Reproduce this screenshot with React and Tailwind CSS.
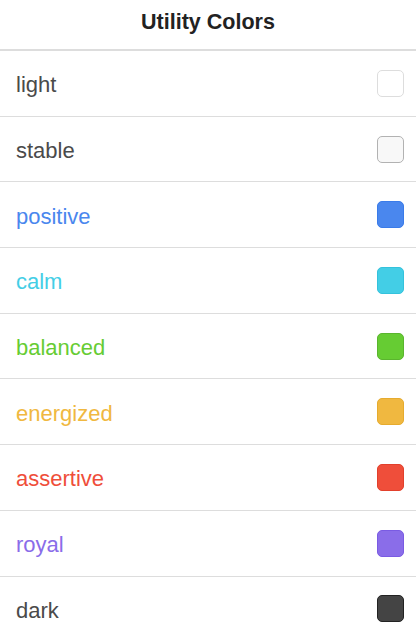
const colors = [
  { name: "light", text: "text-[#4a4a4a]", box: "bg-white border-[#ddd]" },
  { name: "stable", text: "text-[#4a4a4a]", box: "bg-[#f8f8f8] border-[#b2b2b2]" },
  { name: "positive", text: "text-[#4a87ee]", box: "bg-[#4a87ee] border-[#3a7be9]" },
  { name: "calm", text: "text-[#43cee6]", box: "bg-[#43cee6] border-[#34c2dc]" },
  { name: "balanced", text: "text-[#66cc33]", box: "bg-[#66cc33] border-[#5ab52e]" },
  { name: "energized", text: "text-[#f0b840]", box: "bg-[#f0b840] border-[#e6ab2e]" },
  { name: "assertive", text: "text-[#ef4e3a]", box: "bg-[#ef4e3a] border-[#e2402c]" },
  { name: "royal", text: "text-[#8a6de9]", box: "bg-[#8a6de9] border-[#7a5be3]" },
  { name: "dark", text: "text-[#4a4a4a]", box: "bg-[#444] border-[#222]" },
];

export default function App() {
  return (
    <div className="min-h-screen w-full bg-white font-['Liberation_Sans',Arial,sans-serif]">
      {/* Header */}
      <div className="flex h-[51px] items-center justify-center border-b-2 border-[#ddd] bg-white pb-[4px]">
        <h1 className="text-[21.5px] font-bold text-[#222]">Utility Colors</h1>
      </div>

      {/* List */}
      <ul>
        {colors.map((c) => (
          <li
            key={c.name}
            className="flex h-[65.7px] items-center justify-between border-b border-[#ddd] pl-4 pr-3"
          >
            <span className={`pt-[3px] text-[22px] ${c.text}`}>{c.name}</span>
            <span className={`h-[27px] w-[27px] rounded-[5px] border ${c.box}`} />
          </li>
        ))}
      </ul>
    </div>
  );
}
